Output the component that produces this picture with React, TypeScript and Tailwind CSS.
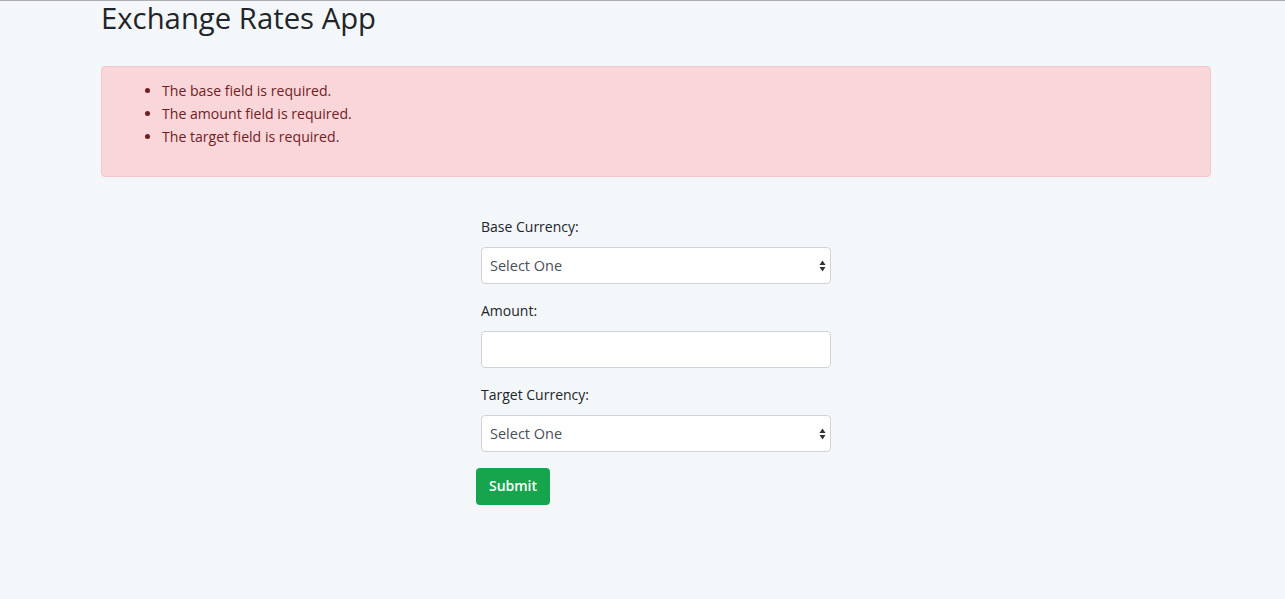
import React from "react";

const font = { fontFamily: "'Open Sans', Lato, sans-serif" };

function Arrows() {
  return (
    <svg width="7" height="12" viewBox="0 0 7 12" className="absolute right-[5px] top-1/2 -translate-y-1/2 pointer-events-none">
      <path d="M3.5 0.5 L6.5 5 L0.5 5 Z" fill="#333" />
      <path d="M3.5 11.5 L6.5 7 L0.5 7 Z" fill="#333" />
    </svg>
  );
}

function SelectBox() {
  return (
    <div className="relative">
      <select className="w-full h-[37px] appearance-none bg-white border border-[#ced4da] rounded-[4px] pl-[8px] pr-6 text-[14.5px] text-[#495057] outline-none">
        <option>Select One</option>
      </select>
      <Arrows />
    </div>
  );
}

export default function App() {
  return (
    <div className="min-h-[599px] bg-[#f4f7fa] border-t border-[#adadb0] text-[14px] leading-[1.6] text-[#212529]" style={font}>
      <div className="w-[1110px] ml-[101px]">
        <h1 className="text-[29.3px] leading-[34px] font-normal text-[#212529] pt-[0px] mb-[31px]">Exchange Rates App</h1>
        <div className="bg-[#f9d6da] border border-[#f5c6cb] rounded-[4px] text-[#721c24] px-[20px] pt-[12px] pb-[12px]">
          <ul className="list-disc pl-[40px] mb-[16px] leading-[23px] text-[14.1px] marker:text-[#721c24]">
            <li>The base field is required.</li>
            <li>The amount field is required.</li>
            <li>The target field is required.</li>
          </ul>
        </div>
        <form className="ml-[380px] w-[350px] mt-[38px]">
          <div className="mb-[15px]">
            <label className="block mb-[8px] leading-[24px]">Base Currency:</label>
            <SelectBox />
          </div>
          <div className="mb-[15px]">
            <label className="block mb-[8px] leading-[24px]">Amount:</label>
            <input className="w-full h-[37px] bg-white border border-[#ced4da] rounded-[4px] px-[8px] outline-none" />
          </div>
          <div className="mb-[16px]">
            <label className="block mb-[8px] leading-[24px]">Target Currency:</label>
            <SelectBox />
          </div>
          <button type="button" className="-ml-[5px] w-[74px] h-[37px] bg-[#16a54c] text-white rounded-[4px] text-[14px] font-semibold">
            Submit
          </button>
        </form>
      </div>
    </div>
  );
}
